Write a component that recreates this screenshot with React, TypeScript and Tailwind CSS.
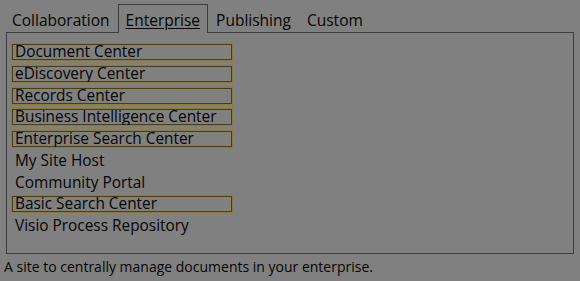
export default function App() {
  const tabs = ["Collaboration", "Enterprise", "Publishing", "Custom"];
  const items = [
    { name: "Document Center", hl: true },
    { name: "eDiscovery Center", hl: true },
    { name: "Records Center", hl: true },
    { name: "Business Intelligence Center", hl: true },
    { name: "Enterprise Search Center", hl: true },
    { name: "My Site Host", hl: false },
    { name: "Community Portal", hl: false },
    { name: "Basic Search Center", hl: true },
    { name: "Visio Process Repository", hl: false },
  ];

  return (
    <div
      className="w-[580px] h-[281px] bg-[#808080] text-[#050505] overflow-hidden"
      style={{ fontFamily: '"Open Sans", "Noto Sans", sans-serif' }}
    >
      {/* tabs */}
      <div className="flex pl-[4px] pt-[4px] h-[32px]">
        {tabs.map((t) =>
          t === "Enterprise" ? (
            <div
              key={t}
              className="relative z-10 h-[29px] px-[7px] border border-b-0 border-[#3e3e3e] bg-[#808080] text-[15.5px] leading-[31px]"
            >
              <span className="underline underline-offset-2">{t}</span>
            </div>
          ) : (
            <div key={t} className="h-[28px] px-[8px] text-[15.5px] leading-[32px]">
              {t}
            </div>
          )
        )}
      </div>

      {/* panel */}
      <div className="ml-[6px] w-[568px] h-[222px] border border-[#3e3e3e] pl-[5px] pt-[11px]">
        {items.map((it) => (
          <div key={it.name} className="h-[21.75px]">
            <div
              className={
                "w-[220px] h-[16px] pl-[2px] text-[15.4px] leading-[14px] " +
                (it.hl
                  ? "border border-[#4e3e0a] outline outline-1 outline-[#8e7c34]"
                  : "border border-transparent")
              }
            >
              {it.name}
            </div>
          </div>
        ))}
      </div>

      <div className="pl-[4px] pt-[3px] text-[14px] leading-[20px]">
        A site to centrally manage documents in your enterprise.
      </div>
    </div>
  );
}
